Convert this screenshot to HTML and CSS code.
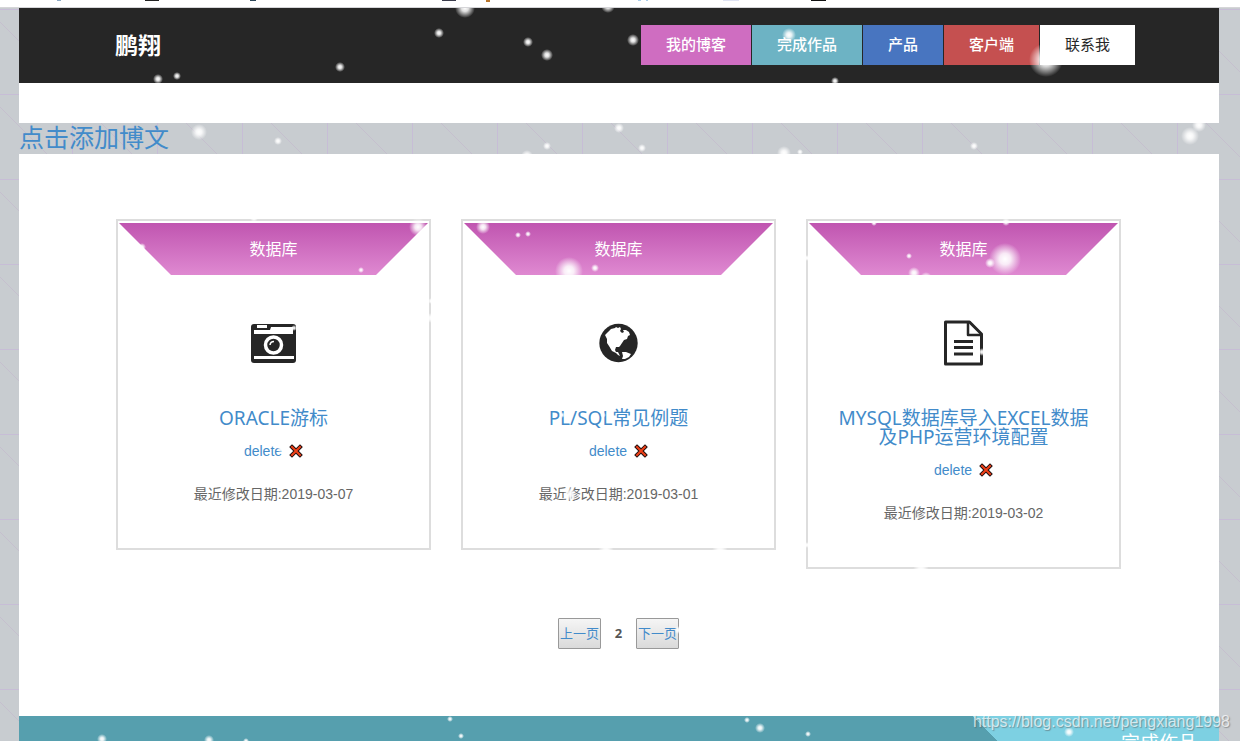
FILE: index.html
```html
<!DOCTYPE html>
<html lang="zh-CN">
<head>
<meta charset="utf-8">
<title>鹏翔</title>
<meta name="viewport" content="width=device-width, initial-scale=1">
<link rel="stylesheet" href="styles.css">
</head>
<body>
<div class="bookmarks">
  <svg width="840" height="2" aria-hidden="true">
    <path fill="#8da9c4" d="M57 0h4v1h-4z"/>
    <path fill="#222" d="M145 0h14v1h-14z"/>
    <path fill="#2d4658" d="M250 0h6v1h-6z"/>
    <path fill="#3b3c4c" d="M442 0h14v1h-14z"/>
    <path fill="#b8752c" d="M486 0h4v2h-4z"/>
    <path fill="#a9cdea" d="M638 0h3v1h-3zM646 0h2v1h-2z"/>
    <path fill="#dfe3f3" d="M723 0h16v1h-16z"/>
    <path fill="#111" d="M811 0h15v1h-15z"/>
  </svg>
</div>
<div class="page">
  <header class="header">
    <h1 class="logo">鹏翔</h1>
    <nav class="nav">
      <a class="nav-link nav-blog" href="#blog">我的博客</a>
      <a class="nav-link nav-works" href="#works">完成作品</a>
      <a class="nav-link nav-products" href="#products">产品</a>
      <a class="nav-link nav-client" href="#client">客户端</a>
      <a class="nav-link nav-contact" href="#contact">联系我</a>
    </nav>
  </header>
  <div class="spacer"></div>
  <a class="add-post" href="#add">点击添加博文</a>
  <main class="blog" id="blog">
    <div class="cards">
      <article class="card">
        <div class="ribbon">数据库</div>
        <svg class="icon" viewBox="0 0 48 48" aria-hidden="true">
          <rect x="1" y="5" width="45" height="39" rx="3" fill="#262626"/>
          <path fill="#fff" d="M7 6h10v3H7zM4 11h16l1-3h22v7H4zM4 37h40v3H4z"/>
          <circle cx="23.500" cy="26" r="8" fill="none" stroke="#fff" stroke-width="3.500"/>
          <path d="M20 26a4 4 0 0 1 4-3.500" fill="none" stroke="#fff" stroke-width="1.500"/>
        </svg>
        <h2 class="title"><a href="#oracle">ORACLE游标</a></h2>
        <a class="delete" href="#delete-1">delete
          <svg class="cross" viewBox="0 0 14 14" aria-hidden="true"><path class="cross-edge" d="M3 3l8 8M11 3l-8 8"/><path class="cross-fill" d="M3 3l8 8M11 3l-8 8"/></svg>
        </a>
        <p class="date">最近修改日期:2019-03-07</p>
      </article>
      <article class="card">
        <div class="ribbon">数据库</div>
        <svg class="icon" viewBox="0 0 48 48" aria-hidden="true">
          <circle cx="23.500" cy="24" r="19.200" fill="#262626"/>
          <path fill="#fff" d="M10 16l3-3 3-3 4-1 1-1 2 1 2-1 1 2-1 2 2 2 2-1-1-2 3 0 3 2 1 3-2 1-1 3-3 1-2 3-2 3-1 1-3 0-1 3 1 2 2 0 1 2 1 2-2-1-2-2-4-2-3-5-2-3 0-4z"/>
          <path fill="#fff" d="M27 33l4 0 5 2-2 3-4 2-3 0 1-3z"/>
        </svg>
        <h2 class="title"><a href="#plsql">PL/SQL常见例题</a></h2>
        <a class="delete" href="#delete-2">delete
          <svg class="cross" viewBox="0 0 14 14" aria-hidden="true"><path class="cross-edge" d="M3 3l8 8M11 3l-8 8"/><path class="cross-fill" d="M3 3l8 8M11 3l-8 8"/></svg>
        </a>
        <p class="date">最近修改日期:2019-03-01</p>
      </article>
      <article class="card">
        <div class="ribbon">数据库</div>
        <svg class="icon" viewBox="0 0 48 48" aria-hidden="true">
          <g fill="none" stroke="#262626" stroke-width="3" stroke-linejoin="round">
            <path d="M5.500 3h24l12 12v30h-36z"/>
            <path d="M28 3v13h13" stroke-width="2.500"/>
            <path d="M14 22.500h19M14 28.500h19M14 35h19"/>
          </g>
        </svg>
        <h2 class="title"><a href="#mysql">MYSQL数据库导入EXCEL数据及PHP运营环境配置</a></h2>
        <a class="delete" href="#delete-3">delete
          <svg class="cross" viewBox="0 0 14 14" aria-hidden="true"><path class="cross-edge" d="M3 3l8 8M11 3l-8 8"/><path class="cross-fill" d="M3 3l8 8M11 3l-8 8"/></svg>
        </a>
        <p class="date">最近修改日期:2019-03-02</p>
      </article>
    </div>
    <div class="pager">
      <button class="page-button" type="button">上一页</button>
      <strong class="page-number">2</strong>
      <button class="page-button" type="button">下一页</button>
    </div>
  </main>
  <section class="works" id="works">
    <h2 class="works-label">完成作品</h2>
  </section>
</div>
<svg class="snow" width="1240" height="733" viewBox="0 8 1240 733" aria-hidden="true">
  <defs>
    <radialGradient id="flake">
      <stop offset="0" stop-color="#fff"/>
      <stop offset=".35" stop-color="#fff" stop-opacity=".85"/>
      <stop offset="1" stop-color="#fff" stop-opacity="0"/>
    </radialGradient>
  </defs>
  <g fill="url(#flake)">
    <circle cx="158" cy="79" r="5"/><circle cx="177" cy="76" r="4"/><circle cx="340" cy="67" r="5"/>
    <circle cx="465" cy="8" r="10"/><circle cx="439" cy="33" r="5"/><circle cx="528" cy="42" r="5"/>
    <circle cx="547" cy="55" r="6"/><circle cx="608" cy="6" r="7"/><circle cx="633" cy="40" r="6"/>
    <circle cx="789" cy="35" r="7"/><circle cx="835" cy="81" r="4"/><circle cx="1046" cy="60" r="17"/>
    <circle cx="199" cy="132" r="8"/><circle cx="278" cy="141" r="4"/><circle cx="527" cy="156" r="6"/>
    <circle cx="547" cy="146" r="4"/><circle cx="619" cy="128" r="5"/><circle cx="642" cy="148" r="4"/>
    <circle cx="784" cy="153" r="7"/><circle cx="800" cy="152" r="3"/><circle cx="974" cy="146" r="4"/>
    <circle cx="1190" cy="136" r="9"/><circle cx="1199" cy="125" r="7"/>
    <circle cx="418" cy="227" r="9"/><circle cx="254" cy="218" r="4"/><circle cx="142" cy="247" r="4"/>
    <circle cx="361" cy="270" r="3"/><circle cx="431" cy="301" r="3"/><circle cx="431" cy="318" r="5"/>
    <circle cx="294" cy="328" r="3"/><circle cx="483" cy="227" r="7"/><circle cx="518" cy="235" r="3"/>
    <circle cx="528" cy="234" r="3"/><circle cx="569" cy="271" r="14"/><circle cx="595" cy="268" r="4"/>
    <circle cx="874" cy="223" r="3"/><circle cx="1006" cy="222" r="4"/><circle cx="909" cy="256" r="3"/>
    <circle cx="1005" cy="259" r="16"/><circle cx="990" cy="263" r="5"/><circle cx="914" cy="273" r="6"/>
    <circle cx="926" cy="278" r="6"/><circle cx="807" cy="258" r="3"/><circle cx="982" cy="352" r="4"/>
    <circle cx="281" cy="449" r="4"/><circle cx="562" cy="415" r="3"/><circle cx="603" cy="415" r="3"/>
    <circle cx="570" cy="494" r="7"/><circle cx="606" cy="551" r="8"/><circle cx="720" cy="551" r="8"/>
    <circle cx="921" cy="570" r="8"/><circle cx="807" cy="545" r="3"/><circle cx="678" cy="630" r="4"/>
    <circle cx="102" cy="739" r="5"/><circle cx="209" cy="740" r="5"/><circle cx="246" cy="741" r="3"/>
    <circle cx="450" cy="719" r="3"/><circle cx="461" cy="736" r="3"/><circle cx="747" cy="720" r="3"/>
    <circle cx="760" cy="728" r="5"/><circle cx="808" cy="734" r="3"/><circle cx="1069" cy="732" r="5"/>
  </g>
</svg>
<div class="watermark">https://blog.csdn.net/pengxiang1998</div>
</body>
</html>
```
FILE: styles.css
```css
* {
  box-sizing: border-box;
}

body {
  margin: 0;
  height: 100vh;
  display: flex;
  flex-direction: column;
  overflow: hidden;
  font-family: "Liberation Sans", "Noto Sans CJK SC", sans-serif;
  background-color: #c8ccd0;
  background-image:
    linear-gradient(to right, #c7bdd6 1px, transparent 1px),
    linear-gradient(to bottom, #c7bdd6 1px, transparent 1px),
    linear-gradient(45deg, transparent 49.5%, #c5bfce 50%, transparent 50.5%);
  background-size: 85px 85px;
  background-position: 72px 9px;
}

a {
  color: #428bca;
  text-decoration: none;
}

.bookmarks {
  flex: none;
  height: 8px;
  background: #fff;
  border-bottom: 1px solid #d5d5d8;
}

.bookmarks svg {
  display: block;
}

.page {
  flex: 1;
  display: flex;
  flex-direction: column;
  margin: 0 21px 0 19px;
}

.header {
  display: flex;
  align-items: center;
  justify-content: space-between;
  height: 75px;
  padding: 0 7% 1px 8%;
  background: #262626;
}

.logo {
  margin: 0;
  padding-top: 2px;
  font-size: 23px;
  line-height: 32px;
  color: #fff;
}

.nav {
  display: flex;
  gap: 1px;
}

.nav-link {
  padding: 0 25px;
  font-size: 15px;
  line-height: 40px;
  font-weight: 500;
  color: #fff;
}

.nav-blog { background: #cf6dc1; }
.nav-works { background: #6db3c4; }
.nav-products { background: #4875c0; }
.nav-client { background: #c55050; }
.nav-contact { background: #fff; color: #262626; font-weight: 400; }

.spacer {
  height: 40px;
  background: #fff;
}

.add-post {
  align-self: flex-start;
  padding-bottom: 5px;
  font-family: "Noto Sans CJK SC", sans-serif;
  font-size: 25px;
  line-height: 26px;
}

.blog {
  padding: 65px 98px 67px 97px;
  background: #fff;
}

.cards {
  display: grid;
  grid-template-columns: repeat(3, 1fr);
  align-items: start;
  gap: 30px;
}

.card {
  display: flex;
  flex-direction: column;
  align-items: center;
  padding: 2px 1px 44px;
  border: 2px solid #ddd;
  text-align: center;
}

.ribbon {
  align-self: stretch;
  padding-top: 2px;
  font-size: 16px;
  line-height: 50px;
  color: #fff;
  background: linear-gradient(#c055b0, #df89d1);
  clip-path: polygon(0 0, 100% 0, calc(100% - 52px) 100%, 52px 100%);
}

.icon {
  width: 48px;
  height: 48px;
  margin: 44px 0 42px;
}

.title {
  margin: 0;
  padding: 0 24px;
  font-family: "Noto Sans", "Noto Sans CJK SC", sans-serif;
  font-size: 19px;
  line-height: 19px;
  font-weight: 400;
}

.delete {
  display: flex;
  align-items: center;
  gap: 7px;
  margin-top: 13px;
  font-size: 14px;
  line-height: 20px;
}

.cross {
  width: 14px;
  height: 14px;
}

.cross path {
  fill: none;
  stroke-linecap: square;
}

.cross-edge {
  stroke: #201010;
  stroke-width: 4;
}

.cross-fill {
  stroke: #f04018;
  stroke-width: 2;
}

.date {
  margin: 23px 0 0;
  font-size: 14px;
  line-height: 20px;
  color: #666;
}

.pager {
  display: flex;
  justify-content: center;
  align-items: center;
  gap: 13px;
  margin-top: 49px;
}

.page-button {
  height: 31px;
  padding: 0 1px 2px;
  border: 1px solid #999;
  border-radius: 1px;
  background: linear-gradient(#f5f5f5, #dadada);
  font-family: "Liberation Sans", "Noto Sans CJK SC", sans-serif;
  font-size: 13px;
  color: #428bca;
}

.page-number {
  width: 9px;
  padding-bottom: 2px;
  font-family: "Noto Sans", sans-serif;
  font-size: 13px;
  text-align: center;
  color: #555;
}

.works {
  flex: 1 0 25px;
  display: flex;
  justify-content: flex-end;
  height: 25px;
  overflow: hidden;
  background: linear-gradient(45deg, transparent 50%, #7dd0e2 50%) right top / 247px 247px no-repeat, #569fae;
}

.works-label {
  margin: 0;
  padding: 14px 22px 0 0;
  font-size: 19px;
  line-height: 28px;
  font-weight: 400;
  color: #fff;
}

.snow {
  position: absolute;
  top: 8px;
  left: 0;
  pointer-events: none;
}

.watermark {
  position: absolute;
  right: 10px;
  bottom: 9px;
  font-size: 16px;
  line-height: 20px;
  color: rgba(255, 255, 255, 0.7);
  text-shadow: 1px 1px 1px rgba(90, 90, 90, 0.5);
}
```
